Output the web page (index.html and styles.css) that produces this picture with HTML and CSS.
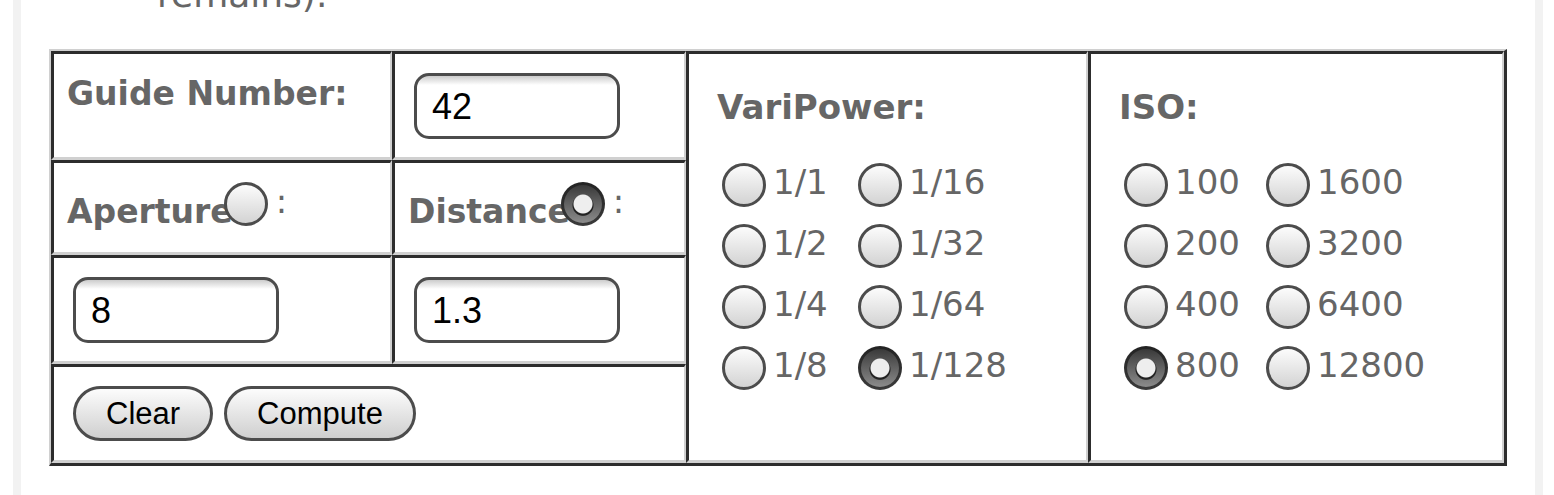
FILE: index.html
```html
<!DOCTYPE html>
<html lang="en">
<head>
<meta charset="utf-8">
<title>Flash Guide Number Calculator</title>
<link rel="stylesheet" href="styles.css">
</head>
<body>
<main class="page">
  <p class="intro">remains).</p>
  <form onsubmit="return false">
  <table class="calc">
    <colgroup><col class="col-a"><col class="col-b"><col class="col-c"><col></colgroup>
    <tr>
      <td><label class="name" for="gn">Guide Number:</label></td>
      <td><input class="field" id="gn" type="text" value="42"></td>
      <td rowspan="4">
        <fieldset class="group">
          <legend class="title">VariPower:</legend>
          <div class="options power">
            <label class="option"><input class="radio" type="radio" name="power">1/1</label>
            <label class="option"><input class="radio" type="radio" name="power">1/16</label>
            <label class="option"><input class="radio" type="radio" name="power">1/2</label>
            <label class="option"><input class="radio" type="radio" name="power">1/32</label>
            <label class="option"><input class="radio" type="radio" name="power">1/4</label>
            <label class="option"><input class="radio" type="radio" name="power">1/64</label>
            <label class="option"><input class="radio" type="radio" name="power">1/8</label>
            <label class="option"><input class="radio" type="radio" name="power" checked>1/128</label>
          </div>
        </fieldset>
      </td>
      <td rowspan="4">
        <fieldset class="group">
          <legend class="title">ISO:</legend>
          <div class="options iso">
            <label class="option"><input class="radio" type="radio" name="iso">100</label>
            <label class="option"><input class="radio" type="radio" name="iso">1600</label>
            <label class="option"><input class="radio" type="radio" name="iso">200</label>
            <label class="option"><input class="radio" type="radio" name="iso">3200</label>
            <label class="option"><input class="radio" type="radio" name="iso">400</label>
            <label class="option"><input class="radio" type="radio" name="iso">6400</label>
            <label class="option"><input class="radio" type="radio" name="iso" checked>800</label>
            <label class="option"><input class="radio" type="radio" name="iso">12800</label>
          </div>
        </fieldset>
      </td>
    </tr>
    <tr>
      <td><div class="mode"><label class="name" for="by-aperture">Aperture</label><input class="radio" id="by-aperture" type="radio" name="mode"><span>:</span></div></td>
      <td><div class="mode"><label class="name" for="by-distance">Distance</label><input class="radio" id="by-distance" type="radio" name="mode" checked><span>:</span></div></td>
    </tr>
    <tr>
      <td><input class="field" type="text" aria-label="Aperture" value="8"></td>
      <td><input class="field" type="text" aria-label="Distance" value="1.3"></td>
    </tr>
    <tr>
      <td colspan="2"><div class="actions"><button class="button" type="button">Clear</button><button class="button" type="button">Compute</button></div></td>
    </tr>
  </table>
  </form>
</main>
</body>
</html>
```
FILE: styles.css
```css
* { box-sizing: border-box; }

body {
  margin: 0;
  background: #fff;
  color: #666;
  font: 34px/40px Verdana, "DejaVu Sans", sans-serif;
}

.page {
  display: flow-root;
  min-height: 100vh;
  margin: 0 11px 0 13px;
  padding: 0 28px;
  border: solid #f2f2f2;
  border-width: 0 8px;
}

.intro {
  margin: -25px 0 34px 108px;
  font-size: 36px;
}

.calc {
  width: 100%;
  table-layout: fixed;
  border-collapse: separate;
  border-spacing: 0;
  border: solid;
  border-width: 2px 3px 3px 2px;
  border-color: #d0d0d0 #2d2d2d #2d2d2d #d0d0d0;
}

.col-a { width: 341px; }
.col-b { width: 294px; }
.col-c { width: 402px; }

td {
  padding: 19px 13px 18px;
  vertical-align: top;
  border: solid;
  border-width: 3px 2px 3px 3px;
  border-color: #2d2d2d #d0d0d0 #d0d0d0 #2d2d2d;
}

.name,
.title { font-weight: bold; }

.name { font-size: 33px; }

.field {
  display: block;
  width: 206px;
  height: 66px;
  margin: 0 0 0 6px;
  padding: 2px 15px 0;
  border: 3px solid #4c4c4c;
  border-radius: 15px;
  background: linear-gradient(#ccc, #fff 9px);
  color: #000;
  font: 36px "Liberation Sans", Arial, sans-serif;
}

.radio {
  appearance: none;
  flex: none;
  width: 44px;
  height: 44px;
  margin: 0;
  border: 3px solid #4c4c4c;
  border-radius: 50%;
  background: linear-gradient(#fff, #d0d0d0) border-box;
}

.radio:checked {
  border-color: rgba(30, 30, 30, 0.75);
  background:
    radial-gradient(circle at 50% 50%, #eee 0 9px, transparent 10px) border-box,
    radial-gradient(circle at 50% 53%, #222 0 10px, transparent 11px) border-box,
    linear-gradient(#333, #929292) border-box;
}

.mode {
  display: flex;
  align-items: flex-start;
  height: 52px;
  line-height: 38px;
}

.mode .name { margin-top: 11px; }
.mode .radio { margin: 0 8px 0 -9px; }

.group {
  min-width: 0;
  margin: 14px 0 0 15px;
  padding: 0;
  border: 0;
}

.title { padding: 0; }

.options {
  display: grid;
  row-gap: 17px;
  margin: 36px 0 0 5px;
}

.power { grid-template-columns: 136px 1fr; }
.iso { grid-template-columns: 142px 1fr; }

.option {
  display: flex;
  gap: 7px;
  height: 44px;
  line-height: 38px;
}

.actions {
  display: flex;
  gap: 11px;
  margin-left: 6px;
}

.button {
  height: 55px;
  margin-bottom: 1px;
  padding: 0 30px;
  border: 3px solid #4c4c4c;
  border-radius: 28px;
  background: linear-gradient(#fff, #ccc) border-box;
  color: #000;
  font: 31px "Liberation Sans", Arial, sans-serif;
}
```
